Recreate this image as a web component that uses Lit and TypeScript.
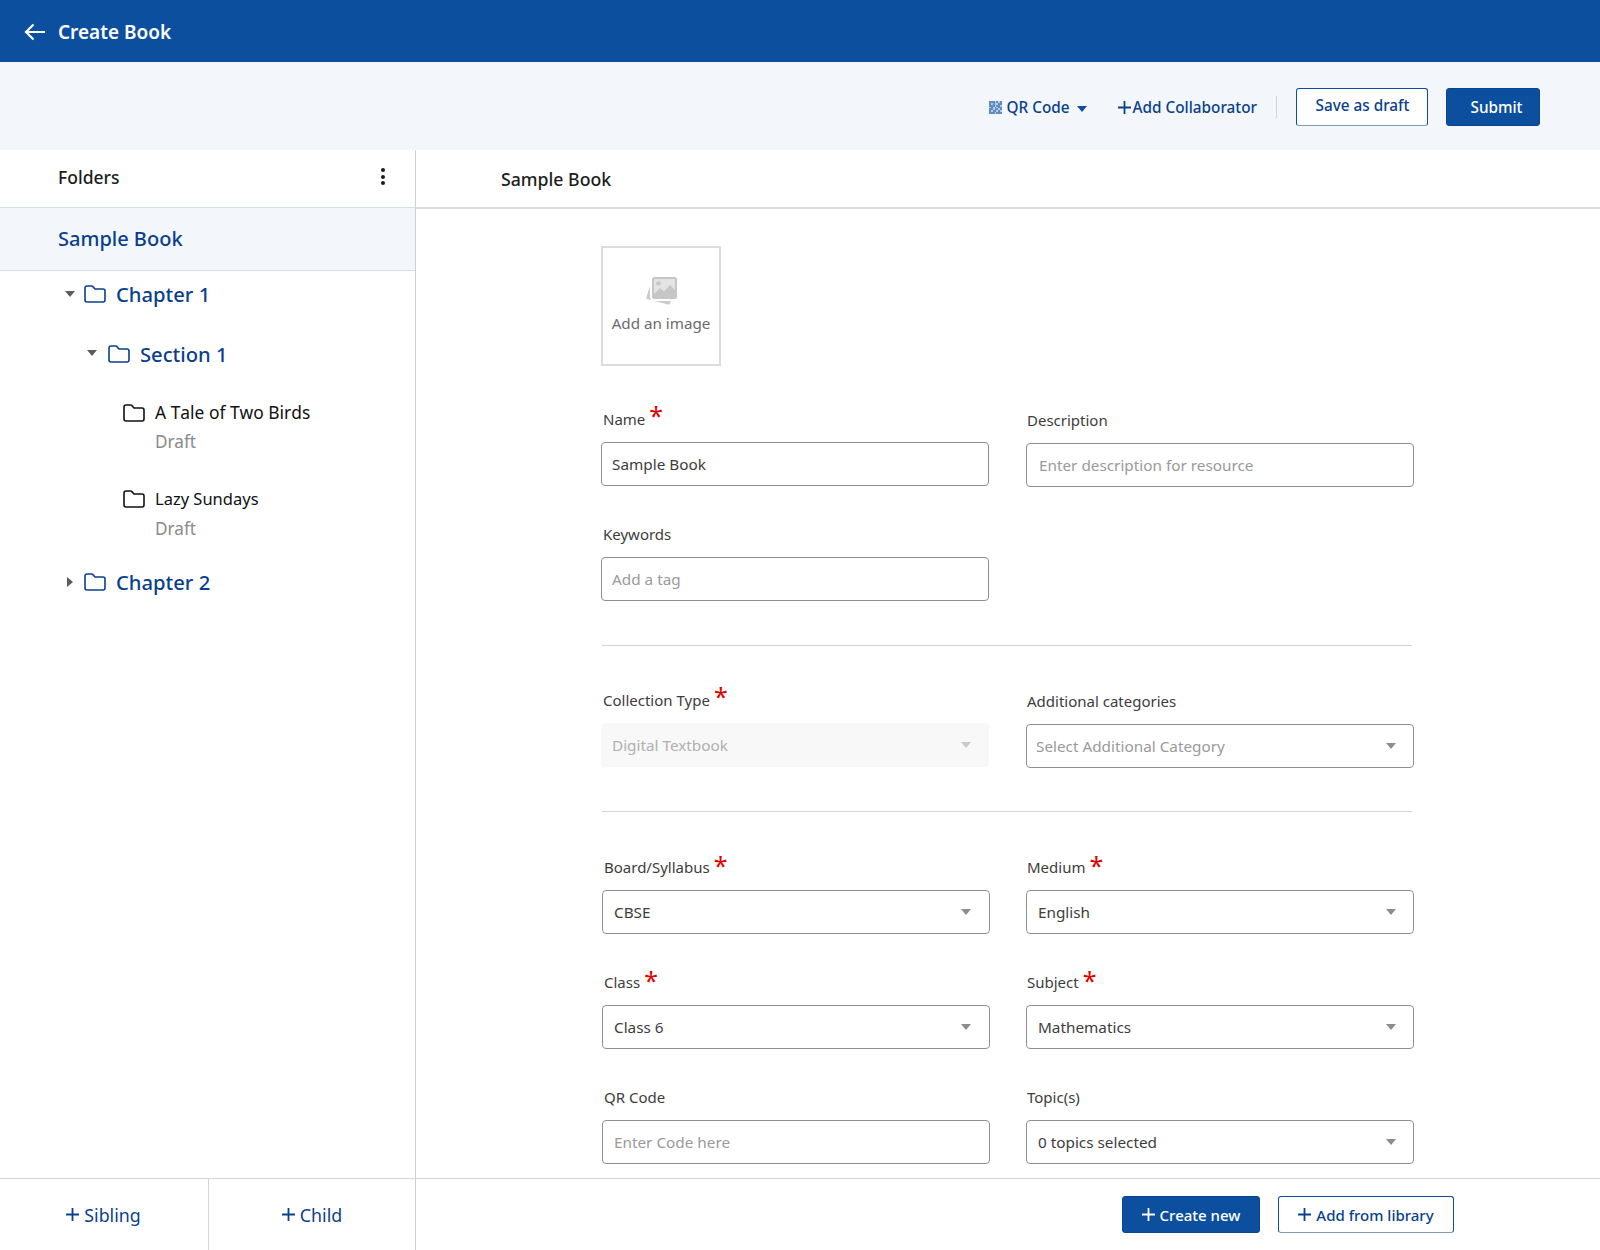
import { LitElement, html, css, svg } from "lit";
import { customElement } from "lit/decorators.js";

const folder = () => html`<svg class="folder" width="22" height="18" viewBox="0 0 22 18" fill="none"><path d="M1 3.2C1 2 1.9 1 3 1h4.6c.5 0 1 .2 1.300.6L11 4h8c1.100 0 2 .9 2 2v9c0 1.100-.9 2-2 2H3c-1.100 0-2-.9-2-2V3.200Z" stroke="currentColor" stroke-width="1.600" stroke-linejoin="round"/></svg>`;
const caretDown = html`<svg class="caret" width="10" height="6" viewBox="0 0 10 6"><path d="M0 0h10L5 6z" fill="currentColor"/></svg>`;
const caretRight = html`<svg class="caret" width="6" height="10" viewBox="0 0 6 10"><path d="M0 0v10l6-5z" fill="currentColor"/></svg>`;
const plus = html`<svg class="plus" width="13" height="13" viewBox="0 0 13 13"><path d="M6.500 0v13M0 6.500h13" stroke="currentColor" stroke-width="1.800"/></svg>`;

const qrCells = ["1110101", "1010011", "1110110", "0101011", "1101101", "1011010", "1110111"];

type Field = { label: string; req?: boolean; kind: "input" | "select"; value?: string; ph?: string; disabled?: boolean; cls?: string };

@customElement("app-root")
export class AppRoot extends LitElement {
  static styles = css`
    :host { display: flex; flex-direction: column; width: 1600px; height: 1250px; overflow: hidden; background: #fff; font-family: "Noto Sans", sans-serif; color: #222; }
    .top { flex: none; box-sizing: border-box; height: 62px; background: #0b4f9e; color: #fff; display: flex; align-items: center; padding: 2px 0 0 24px; gap: 12px; font-size: 19px; font-weight: 600; }
    .toolbar { flex: none; box-sizing: border-box; height: 88px; background: #f3f6fa; display: flex; align-items: center; justify-content: flex-end; padding: 2px 60px 0 0; color: #0a3f8c; font-size: 15.300px; font-weight: 500; }
    .qr { display: flex; align-items: center; gap: 5px; margin-right: 31px; }
    .qr .caret { margin-left: 2px; color: #0b4f9e; margin-top: 3px; }
    .collab { display: flex; align-items: center; gap: 2px; }
    .sep { width: 1px; height: 22px; background: #cfd4da; margin: 0 19px; }
    .btn { box-sizing: border-box; display: flex; align-items: center; justify-content: center; height: 38px; border-radius: 3px; font-size: 15.300px; font-weight: 500; }
    .btn.outline { background: #fff; border: 1px solid #0b4f9e; border-bottom-color: #7f9db5; color: #0a3f8c; }
    .btn.solid { background: #0b4f9e; color: #fff; border: 1px solid #0a4690; }
    .draft { width: 132px; margin-right: 18px; padding: 0 0 4px 1px; }
    .submit { width: 94px; padding-left: 7px; }
    .body { flex: 1; min-height: 0; display: flex; }
    .side { flex: none; width: 415px; display: flex; flex-direction: column; border-right: 1px solid #cfcfcf; }
    .side-head { flex: none; box-sizing: border-box; height: 58px; display: flex; align-items: center; justify-content: space-between; padding: 0 30px 4px 58px; font-size: 17.500px; font-weight: 500; color: #1c1c1c; border-bottom: 1px solid #cfe0ef; }
    .kebab { display: flex; flex-direction: column; gap: 2.500px; }
    .kebab i { display: block; width: 4px; height: 4px; border-radius: 50%; background: #1c1c1c; }
    .root { flex: none; box-sizing: border-box; height: 63px; display: flex; align-items: center; padding: 0 0 2px 58px; background: #f3f6fa; border-bottom: 1px solid #cfe0ef; color: #0a3f8c; font-size: 20px; font-weight: 500; }
    .tree { flex: 1; min-height: 0; }
    .node { display: flex; align-items: center; color: #0a3f8c; font-size: 20.200px; font-weight: 500; }
    .node .caret { color: #5c5c5c; }
    .ch1 { height: 58px; margin-top: -6px; padding-left: 65px; }
    .sec { height: 61px; padding-left: 87px; }
    .ch2 { height: 40px; padding-left: 67px; margin-top: 6px; }
    .ch1 .caret { margin-right: 9px; margin-top: -1px; }
    .ch2 .caret { margin-right: 11px; }
    .sec .caret { margin-right: 11px; margin-top: -1px; }
    .node .label { margin-left: 10px; }
    .leaf { display: grid; grid-template-columns: 21px auto; column-gap: 11px; padding-left: 123px; color: #111; font-size: 17px; align-items: center; height: 86px; align-content: start; padding-top: 14px; box-sizing: border-box; }
    .leaf .label { line-height: 29px; }
    .leaf .tale { font-kerning: none; font-size: 17.400px; }
    .leaf .lazy { font-size: 16.500px; line-height: 30px; }
    .leaf .st { grid-column: 2; color: #8a8a8a; line-height: 29px; font-size: 17.200px; }
    .leaf .folder { color: #111; }
    .side-foot { flex: none; height: 72px; box-sizing: border-box; border-top: 1px solid #d6d6d6; display: flex; }
    .sf { flex: 1; display: flex; align-items: center; justify-content: center; gap: 5px; color: #0a3f8c; font-size: 17.800px; }
    .sf:first-child { flex: none; width: 208px; padding-right: 1px; box-sizing: border-box; }
    .sf + .sf { border-left: 1px solid #d6d6d6; }
    .main { flex: 1; min-width: 0; display: flex; flex-direction: column; }
    .main-head { flex: none; box-sizing: border-box; height: 59px; display: flex; align-items: center; padding: 0 0 0 85px; font-size: 17.700px; font-weight: 500; color: #1c1c1c; border-bottom: 2px solid #d9dde0; }
    .form { flex: 1; min-height: 0; overflow: hidden; padding: 37px 0 0 185px; box-sizing: border-box; }
    .img { box-sizing: border-box; width: 120px; height: 120px; border: 2px solid #dcdcdc; display: flex; flex-direction: column; align-items: center; color: #6b6b6b; font-size: 15.200px; padding-top: 29px; }
    .img svg { margin-bottom: 8px; }
    .rows { width: 814px; }
    .row { display: grid; grid-template-columns: 388px 388px; column-gap: 37px; }
    .rw1 { margin-top: 39px; }
    .f { display: flex; flex-direction: column; }
    .lab { box-sizing: border-box; height: 37px; padding: 0 0 10px 2px; font-size: 15px; color: #3d3d3d; display: flex; align-items: center; gap: 4px; line-height: 20px; }
    .lab b { color: #e00000; font-size: 25px; font-weight: 400; line-height: 20px; height: 20px; position: relative; top: -4px; }
    .nudge .lab b { top: -2px; }
    .ctl { box-sizing: border-box; height: 44px; border: 1px solid #8f8f8f; border-bottom-width: 1.500px; border-radius: 4px; display: flex; align-items: center; justify-content: space-between; padding: 0 17px 0 10px; font-size: 15.300px; color: #3d3d3d; background: #fff; }
    .ctl .ph { color: #9a9a9a; }
    .ctl .caret { color: #8c8c8c; }
    .ctl.dis { background: #f8f8f8; border-color: #f8f8f8; color: #b0b0b0; }
    .ctl.dis .caret { color: #c9c9c9; }
    .shift { margin-top: 1px; }
    .shift .lab { padding-left: 1px; }
    .shift .ctl { padding-left: 12px; }
    .shift.tight .ctl { padding-left: 9px; }
    .rule { height: 1px; background: #d4d4d4; margin: 44px 0 40px 1px; width: 810px; }
    .rule2 { margin: 43px 0 41px 1px; }
    .nudge { margin-left: 1px; column-gap: 36px; }
    .nudge .ctl { padding-left: 11px; }
    .nudge .f:first-child .ctl { padding-right: 18px; }
    .nudge .f + .f .lab { padding-left: 1px; }
    .g1 { margin-top: 33px; }
    .g2 { margin-top: 34px; }
    .bar { flex: none; box-sizing: border-box; height: 72px; border-top: 1px solid #d6d6d6; display: flex; align-items: center; justify-content: flex-end; padding: 0 146px 0 0; gap: 18px; }
    .bar .btn { height: 37px; gap: 5px; font-size: 15px; font-weight: 500; }
    .create { width: 138px; }
    .lib { width: 176px; }
  `;

  private field(f: Field) {
    return html`<div class="f ${f.cls ?? ""}">
      <div class="lab">${f.label}${f.req ? html`<b>*</b>` : ""}</div>
      <div class="ctl ${f.disabled ? "dis" : ""}">
        <span class=${f.ph ? "ph" : ""}>${f.value ?? f.ph}</span>
        ${f.kind === "select" ? caretDown : ""}
      </div>
    </div>`;
  }

  render() {
    return html`
      <div class="top">
        <svg width="22" height="18" viewBox="0 0 22 18" fill="none"><path d="M21 9H2M9.500 1.500 2 9l7.500 7.500" stroke="#fff" stroke-width="2.200"/></svg>
        <span>Create Book</span>
      </div>
      <div class="toolbar">
        <div class="qr">
          <svg width="13" height="13" viewBox="0 0 7 7" shape-rendering="crispEdges">
            <rect width="7" height="7" fill="#b9cce4"/>
            ${qrCells.flatMap((r, y) => [...r].map((c, x) => c === "1" ? svg`<rect x=${x} y=${y} width="1" height="1" fill="#5e8dc4"/>` : ""))}
          </svg>
          <span>QR Code</span>${caretDown}
        </div>
        <div class="collab">${plus}<span>Add Collaborator</span></div>
        <div class="sep"></div>
        <div class="btn outline draft">Save as draft</div>
        <div class="btn solid submit">Submit</div>
      </div>
      <div class="body">
        <div class="side">
          <div class="side-head"><span>Folders</span><span class="kebab"><i></i><i></i><i></i></span></div>
          <div class="root">Sample Book</div>
          <div class="tree">
            <div class="node ch1">${caretDown}${folder()}<span class="label">Chapter 1</span></div>
            <div class="node sec">${caretDown}${folder()}<span class="label">Section 1</span></div>
            <div class="leaf">${folder()}<span class="label tale">A Tale of Two Birds</span><span class="st">Draft</span></div>
            <div class="leaf">${folder()}<span class="label lazy">Lazy Sundays</span><span class="st">Draft</span></div>
            <div class="node ch2">${caretRight}${folder()}<span class="label">Chapter 2</span></div>
          </div>
          <div class="side-foot">
            <div class="sf">${plus}<span>Sibling</span></div>
            <div class="sf">${plus}<span>Child</span></div>
          </div>
        </div>
        <div class="main">
          <div class="main-head">Sample Book</div>
          <div class="form">
            <div class="img">
              <svg width="31" height="28" viewBox="0 0 31 28">
                <path d="M5 6 .5 20c-.3 1 .3 2 1.300 2.300L22 27.500c1 .3 2-.3 2.300-1.300l.5-2.200H8c-2.200 0-4-1.800-4-4V9z" fill="#cbcbcb"/>
                <rect x="6" y="0" width="25" height="22" rx="2.500" fill="#c6c6c6"/>
                <rect x="8" y="2" width="21" height="18" rx="1" fill="#e4e4e4"/>
                <path d="M8 17l6-6 4 3.500 6-6.500 5 5v7H8z" fill="#c6c6c6"/>
                <circle cx="12.500" cy="6.500" r="2.300" fill="#c6c6c6"/>
              </svg>
              <span>Add an image</span>
            </div>
            <div class="rows">
              <div class="row rw1">
                ${this.field({ label: "Name", req: true, kind: "input", value: "Sample Book" })}
                ${this.field({ label: "Description", kind: "input", ph: "Enter description for resource", cls: "shift" })}
              </div>
              <div class="row g1">
                ${this.field({ label: "Keywords", kind: "input", ph: "Add a tag" })}
              </div>
              <div class="rule"></div>
              <div class="row">
                ${this.field({ label: "Collection Type", req: true, kind: "select", value: "Digital Textbook", disabled: true })}
                ${this.field({ label: "Additional categories", kind: "select", ph: "Select Additional Category", cls: "shift tight" })}
              </div>
              <div class="rule rule2"></div>
              <div class="row nudge">
                ${this.field({ label: "Board/Syllabus", req: true, kind: "select", value: "CBSE" })}
                ${this.field({ label: "Medium", req: true, kind: "select", value: "English" })}
              </div>
              <div class="row nudge g2">
                ${this.field({ label: "Class", req: true, kind: "select", value: "Class 6" })}
                ${this.field({ label: "Subject", req: true, kind: "select", value: "Mathematics" })}
              </div>
              <div class="row nudge g2">
                ${this.field({ label: "QR Code", kind: "input", ph: "Enter Code here" })}
                ${this.field({ label: "Topic(s)", kind: "select", value: "0 topics selected" })}
              </div>
            </div>
          </div>
          <div class="bar">
            <div class="btn solid create">${plus}<span>Create new</span></div>
            <div class="btn outline lib">${plus}<span>Add from library</span></div>
          </div>
        </div>
      </div>
    `;
  }
}
